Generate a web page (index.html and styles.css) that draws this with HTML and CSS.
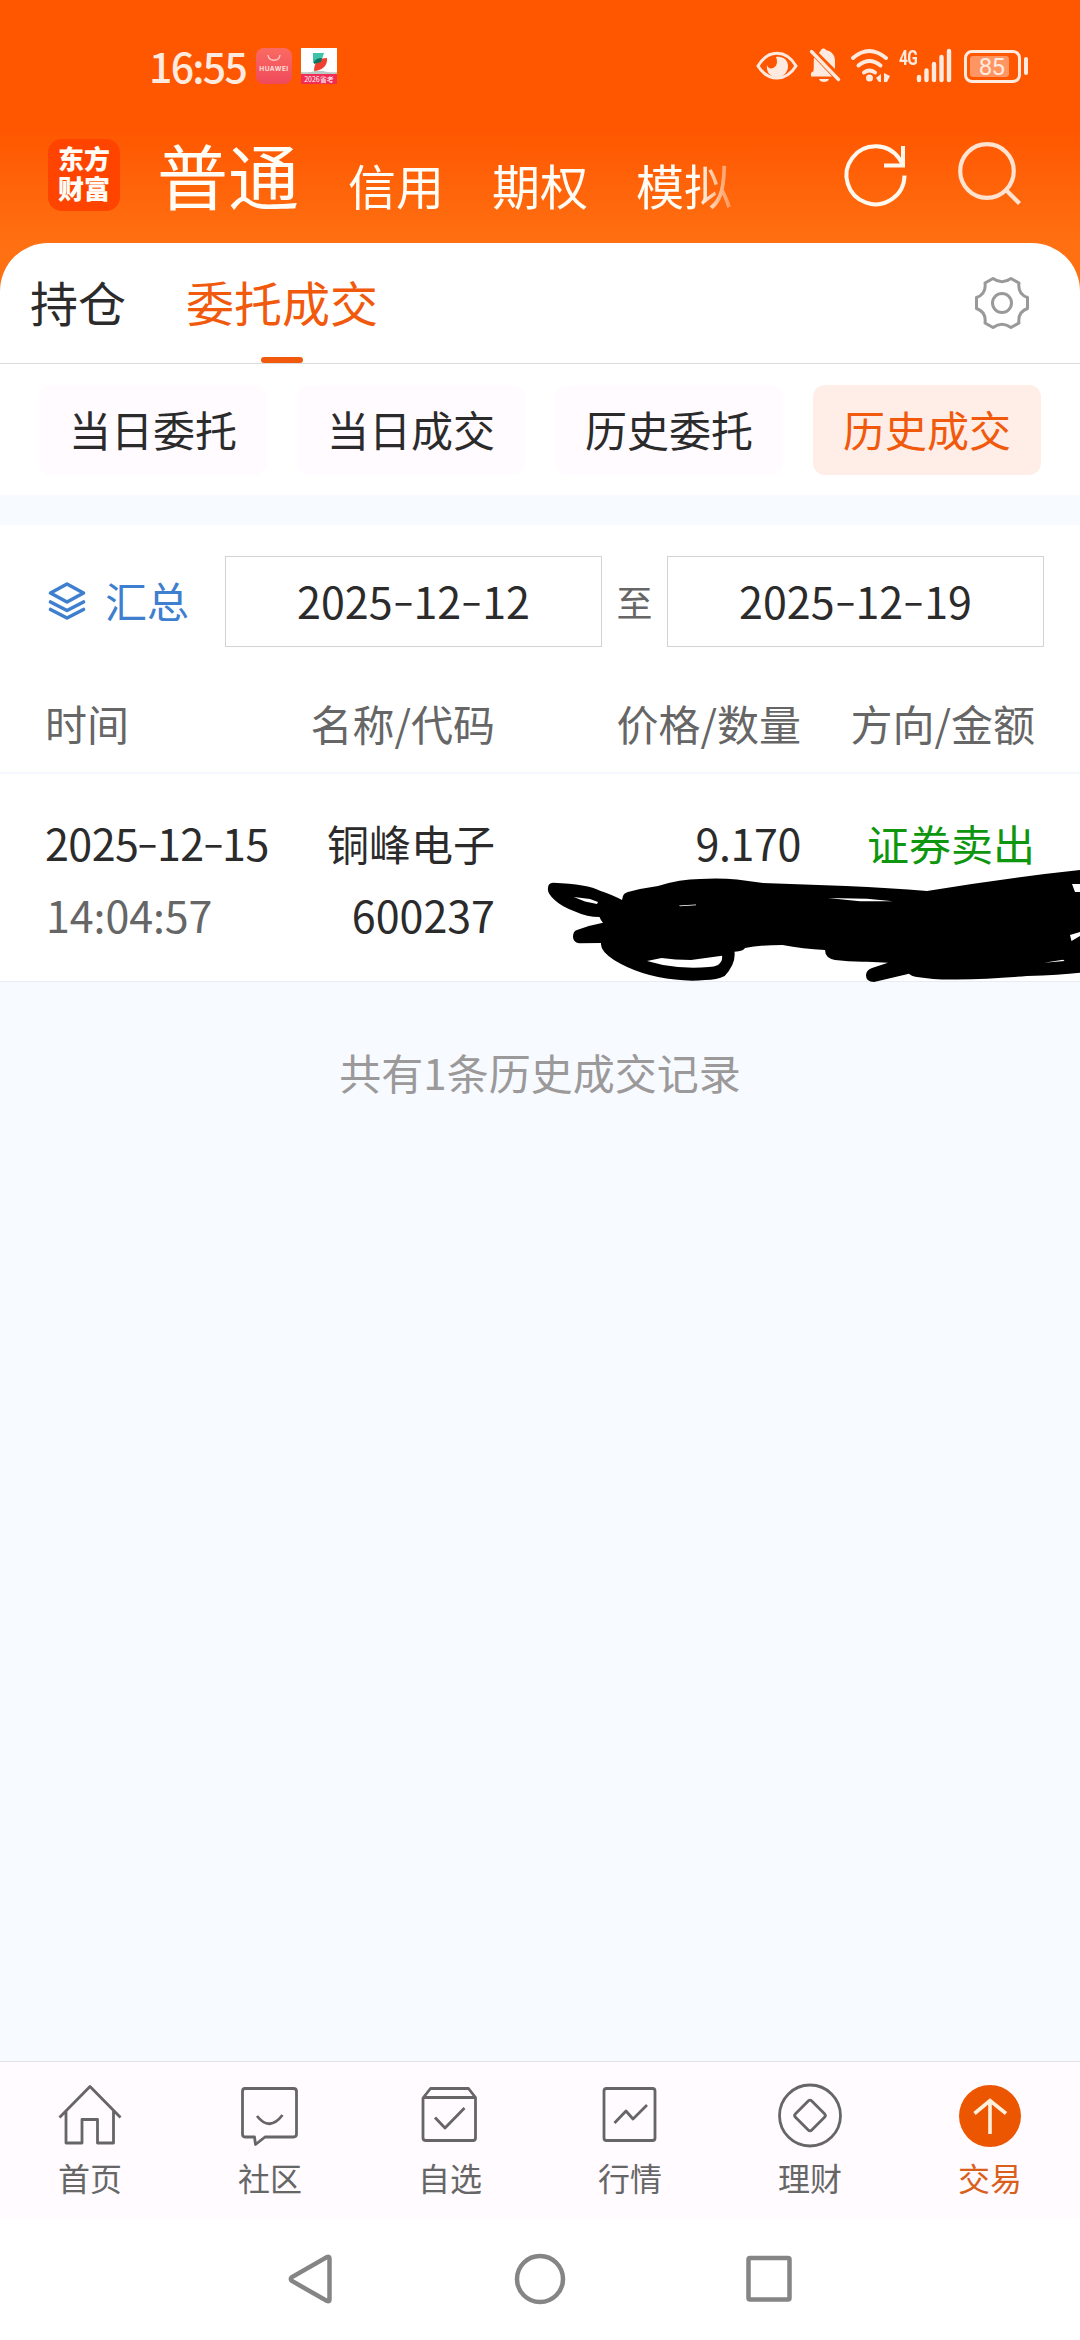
FILE: index.html
```
<!DOCTYPE html>
<html lang="zh-CN">
<head>
    <meta charset="UTF-8">
    <meta name="viewport" content="width=device-width, initial-scale=1.0">
    <title>历史成交</title>
    <link rel="stylesheet" href="styles.css">
</head>
<body>
    <div class="phone">
        <header class="top">
            <div class="status">
                <span class="clock">16:55</span>
                <div class="app-badge huawei">
                    <svg width="14" height="7" viewBox="0 0 14 7"><path d="M1 0c1 7 11 7 12 0" fill="none" stroke="#ffc9c4" stroke-width="1.4"/></svg>
                    <span>HUAWEI</span>
                </div>
                <div class="app-badge fenbi">
                    <svg width="36" height="26" viewBox="0 0 36 26">
                        <path d="M0 24q9 1 14-1h8q5 2 14 1v2H0z" fill="#b9c9c4"/>
                        <path d="M12 5h11l-3 9-8 1z" fill="#3fc3a8"/>
                        <path d="M26 10c1 8-6 13-13 13 0-8 4-13 13-13z" fill="#ee4030"/>
                        <path d="M13 14q2-4 8-4l-1 4-7 2z" fill="#0d7360"/>
                    </svg>
                    <span>2026省考</span>
                </div>
                <div class="signals">
                    <svg class="eye" width="42" height="30" viewBox="0 0 42 30">
                        <path d="M2 15C12-2 30-2 40 15 30 31 12 31 2 15z" fill="none" stroke="#ffeadf" stroke-width="3"/>
                        <path d="M20 6c7-1 12 3 12 9s-4 11-11 11-11-5-10-12c1 3 3 4 6 3 4-2 5-6 3-11z" fill="#ffeadf"/>
                    </svg>
                    <svg class="bell" width="34" height="36" viewBox="0 0 34 36">
                        <path d="M3 28.500h21L6 9.500C5.500 14 6 19 5.500 23L3 25zM11 5C12 3.500 12.500 3 13 2c1-2 4-2 5 0 7 2 9 6 9 11v8zM11 31h10c-1 4-9 4-10 0z" fill="#ffeadf"/>
                        <path d="M3.500 3.500l27 28" stroke="#ffeadf" stroke-width="3.400" stroke-linecap="round"/>
                    </svg>
                    <svg class="wifi" width="42" height="36" viewBox="0 0 42 36">
                        <g fill="none" stroke="#ffeadf" stroke-width="4" stroke-linecap="round">
                            <path d="M3 10q16-14 33 0"/>
                            <path d="M8.500 17.500q11-9 22 0"/>
                            <path d="M14 24.500q5.500-4 11 0"/>
                        </g>
                        <circle cx="19.500" cy="30" r="3.500" fill="#ffeadf"/>
                        <path d="M31 26v8h-2l-3-4zM34 34v-9l6 3-3 6z" fill="#ffeadf"/>
                    </svg>
                    <span class="net">4G</span>
                    <svg class="bars" width="36" height="36" viewBox="0 0 36 36">
                        <path d="M3 29v3M10.500 22.500V32M18 16v16M25.500 9v23M33 3v29" stroke="#ffeadf" stroke-width="4.400" stroke-linecap="round"/>
                    </svg>
                    <div class="battery"><span>85</span></div>
                    <i class="battery-tip"></i>
                </div>
            </div>
            <div class="account">
                <div class="logo">东方<br>财富</div>
                <nav class="account-tabs">
                    <span class="current">普通</span>
                    <span>信用</span>
                    <span>期权</span>
                    <span>模拟</span>
                </nav>
                <svg class="refresh" width="64" height="64" viewBox="0 0 64 64" fill="none" stroke="#fff8ee" stroke-width="4">
                    <path d="M60.500 32.500A29 29 0 1 1 55.500 16l3 5"/>
                    <path d="M59 3v19.500H40"/>
                </svg>
                <svg class="search" width="64" height="64" viewBox="0 0 64 64" fill="none" stroke="#ffe2cf" stroke-width="4.200">
                    <ellipse cx="29" cy="29" rx="26.800" ry="26.800"/>
                    <path d="M47.500 47.500L61.500 61.500"/>
                </svg>
            </div>
        </header>

        <main class="panel">
            <div class="main-tabs">
                <span>持仓</span>
                <span class="active">委托成交</span>
                <svg class="gear" width="54" height="52" viewBox="0 0 54 52" fill="none" stroke="#999" stroke-width="3" stroke-linejoin="round">
                    <path d="M18 1.500Q27 8 36 1.500L44 6Q42.500 17 52.500 20.500V31.500Q42.500 35 44 46L36 50.500Q27 44 18 50.500L10 46Q11.500 35 1.500 31.500V20.500Q11.500 17 10 6z"/>
                    <circle cx="27" cy="26" r="9.500"/>
                </svg>
            </div>

            <div class="chips">
                <span class="chip">当日委托</span>
                <span class="chip">当日成交</span>
                <span class="chip">历史委托</span>
                <span class="chip on">历史成交</span>
            </div>

            <div class="filter">
                <svg width="38" height="38" viewBox="0 0 38 38" fill="none" stroke="#3f7fcf" stroke-width="3.600" stroke-linejoin="round" stroke-linecap="round">
                    <path d="M19 2L35.500 11 19 20 2.500 11z"/>
                    <path d="M2.500 20L19 28.500 35.500 20"/>
                    <path d="M2.500 27.500L19 36 35.500 27.500"/>
                </svg>
                <span class="summary">汇总</span>
                <div class="date-box">2025<i>-</i>12<i>-</i>12</div>
                <span class="to">至</span>
                <div class="date-box">2025<i>-</i>12<i>-</i>19</div>
            </div>

            <div class="row head">
                <span>时间</span>
                <span>名称/代码</span>
                <span>价格/数量</span>
                <span>方向/金额</span>
            </div>

            <div class="row record">
                <div class="cell"><span class="date">2025<i>-</i>12<i>-</i>15</span><span class="time">14:04:57</span></div>
                <div class="cell"><span class="name">铜峰电子</span><span>600237</span></div>
                <div class="cell"><span class="price">9.170</span></div>
                <div class="cell"><span class="sell">证券卖出</span></div>
                <!-- hand-drawn cover over quantity and amount -->
                <svg class="scribble" width="550" height="130" viewBox="530 860 550 130">
                    <path fill-rule="evenodd" d="M622 900L623 896Q624 893 628 892Q643 888 658 886Q680 879 700 879Q720 878 737 879.500Q750 881 763 883L846 886Q890 888 927 891Q1005 878 1080 870
                        V884L1072 884L1075 892L1080 892V932L1070 935L1071.500 941L1080 936V972.700Q1060 975 1027 976Q990 979 957 979.500Q935 980 917 977Q911 976 909 973.700
                        L874 982Q866 982 866 975.500Q866 970 872 968L888 962.700Q878 962 867 961.700Q850 962 835 960Q825 958 825 950Q803 949 782.500 945Q760 945 745 948Q744 951 734.500 951.700
                        Q736 964 724.700 976Q717 980 705 980Q690 981.500 675 979.500Q640 976 614 960Q600 951 601 943L579 943.300Q573 942 573 936.700Q573 931 577 930Q590 925 603 922.700Q601 921 599.500 917
                        Q587 917 575.600 911.700Q562 907 554.600 900Q547 893 548 888Q548 883 553 882.700Q588 884 600 890.700Q613 895 622 900z
                        M573.800 897L590 899 598 902 597 904 585 901.500z
                        M647 961L661.500 958Q675 960 691 960L722 955.700Q723 961 718 965Q714 967 709 967Q685 969 663 965z
                        M828 898L867 898.700 893 901.300 860 901.300z
                        M679 905.500l17-1v.800l-16 1z
                        M1044 962.700L1063 959.700 1064.700 961z"/>
                </svg>
            </div>

            <div class="empty">共有1条历史成交记录</div>
        </main>

        <nav class="tabbar">
            <div class="tab">
                <svg width="66" height="66" viewBox="0 0 66 66">
                    <path d="M2.500 35.500L33 4.500 63.500 35.500M9 29V61H25V37.500H40.500V61H56.500V29"/>
                </svg>
                <span>首页</span>
            </div>
            <div class="tab">
                <svg width="66" height="66" viewBox="0 0 66 66">
                    <path d="M8 6.500H56.500Q59.500 6.500 59.500 9.500V52Q59.500 55 56.500 55H28L18.500 62.500 17.500 55H8Q5.500 55 5.500 52V9.500Q5.500 6.500 8 6.500zM20 34Q32.500 50 45.500 33"/>
                </svg>
                <span>社区</span>
            </div>
            <div class="tab">
                <svg width="66" height="66" viewBox="0 0 66 66">
                    <path d="M6 16L13.500 6.500H51.500L58.500 15.500V56Q58.500 58.500 56 58.500H9Q6 58.500 6 56zM6 15.500H58.500M18 35.500L28 46 47.500 26"/>
                </svg>
                <span>自选</span>
            </div>
            <div class="tab">
                <svg width="66" height="66" viewBox="0 0 66 66">
                    <rect x="7" y="6.500" width="51" height="52" rx="2.500"/>
                    <path d="M17.500 41L29 29 36 37 50 23"/>
                </svg>
                <span>行情</span>
            </div>
            <div class="tab">
                <svg width="66" height="66" viewBox="0 0 66 66">
                    <circle cx="33" cy="33.500" r="30.500"/>
                    <rect x="21.500" y="22" width="23" height="23" rx="2.500" transform="rotate(45 33 33.500)"/>
                </svg>
                <span>理财</span>
            </div>
            <div class="tab active">
                <svg width="66" height="66" viewBox="0 0 66 66">
                    <circle class="disc" cx="33" cy="34" r="31"/>
                    <path d="M33 52V19M17.500 31.500L33 18.500 49 31.500"/>
                </svg>
                <span>交易</span>
            </div>
        </nav>

        <div class="sysnav">
            <svg width="50" height="54" viewBox="0 0 50 54"><path d="M43.500 6.500V47.500Q43.500 50 41 49L6 29Q3.500 27 6 25L41 5Q43.500 4 43.500 6.500z"/></svg>
            <svg width="54" height="54" viewBox="0 0 54 54"><circle cx="27" cy="27" r="23"/></svg>
            <svg width="50" height="54" viewBox="0 0 50 54"><rect x="4.500" y="6" width="41" height="41.500" rx="1.500"/></svg>
        </div>
    </div>
</body>
</html>
```

FILE: styles.css
```
* {
    box-sizing: border-box;
}
body {
    margin: 0;
    font-family: "Noto Sans CJK SC", "Noto Sans", sans-serif;
    color: #2b2b2b;
}
i {
    font-style: normal;
}
svg {
    display: block;
    flex-shrink: 0;
    overflow: visible;
}
.phone {
    width: 1080px;
    height: 2340px;
    display: flex;
    flex-direction: column;
    background: #f7faff;
    overflow: hidden;
}

/* orange header */
.top {
    height: 300px;
    flex-shrink: 0;
    background: linear-gradient(#ff5600 0, #ff5600 125px, #ff7012 243px, #ff7012 100%);
}
.status {
    height: 104px;
    padding: 32px 52px 0 149px;
    display: flex;
    align-items: center;
    color: #ffeadf;
}
.clock {
    width: 107px;
    font-size: 41px;
    line-height: 60px;
    letter-spacing: -1.7px;
    font-weight: 500;
    margin-top: -6px;
}
.app-badge {
    width: 36px;
    height: 36px;
    margin-right: 9px;
    margin-top: -4px;
    display: flex;
    flex-direction: column;
    align-items: center;
    overflow: hidden;
}
.huawei {
    border-radius: 8px;
    background: linear-gradient(#fb6a62, #ef4a5c);
    padding-top: 7px;
}
.huawei span {
    font: bold 6.5px/8px Inter, sans-serif;
    letter-spacing: 0.5px;
    margin-top: 3px;
    color: #ffe0dc;
}
.fenbi {
    background: #fff;
}
.fenbi span {
    width: 36px;
    background: #f22d55;
    color: #fff;
    font-size: 7px;
    line-height: 10px;
    text-align: center;
}
.signals {
    margin-left: auto;
    margin-top: -4px;
    display: flex;
    align-items: center;
}
.bell {
    margin-left: 10px;
}
.wifi {
    margin-left: 8px;
}
.net {
    align-self: flex-start;
    width: 18px;
    margin-left: 7px;
    font: bold 21px/20px "Roboto", sans-serif;
    letter-spacing: -1px;
    transform: scaleX(0.74);
    transform-origin: left;
    white-space: nowrap;
}
.bars {
    margin-left: -1px;
}
.battery {
    width: 57px;
    height: 33px;
    margin-left: 12px;
    border: 3px solid #ffeadf;
    border-radius: 8px;
    padding: 3px;
}
.battery span {
    display: block;
    width: 39px;
    height: 21px;
    border-radius: 3px;
    background: #ff9563;
    font: 24px/22px "Roboto", sans-serif;
    letter-spacing: -0.8px;
    text-align: center;
    padding-left: 4px;
}
.battery-tip {
    width: 4px;
    height: 18px;
    margin-left: 3px;
    border-radius: 2px;
    background: #ffeadf;
}
.account {
    height: 139px;
    padding: 3px 58px 0 48px;
    display: flex;
    align-items: center;
    color: #fffdf6;
}
.logo {
    width: 72px;
    height: 72px;
    border-radius: 14px;
    background: #ff4400;
    font-size: 26px;
    line-height: 30px;
    font-weight: 900;
    text-align: center;
    padding-top: 4px;
}
.account-tabs {
    width: 590px;
    height: 80px;
    margin-left: 37px;
    padding-bottom: 6px;
    display: flex;
    align-items: baseline;
    gap: 48px;
    font-size: 48px;
    line-height: 48px;
    white-space: nowrap;
    -webkit-mask-image: linear-gradient(90deg, #000 540px, transparent 590px);
    mask-image: linear-gradient(90deg, #000 540px, transparent 590px);
}
.account-tabs span {
    position: relative;
    top: 2px;
}
.account-tabs .current {
    top: 1px;
    font-size: 71px;
    line-height: 74px;
    margin-right: 1px;
}
.refresh {
    margin-left: auto;
}
.search {
    margin-left: 50px;
    margin-top: -2px;
}

/* white sheet */
.panel {
    flex: 1;
    margin-top: -57px;
}
.main-tabs {
    height: 121px;
    padding: 0 51px 0 30px;
    display: flex;
    align-items: center;
    gap: 60px;
    background: #fff;
    border-bottom: 1px solid #dcdcdc;
    border-radius: 48px 48px 0 0;
    font-size: 48px;
}
.main-tabs span {
    position: relative;
    height: 120px;
    line-height: 117px;
}
.main-tabs .active {
    color: #f1590c;
}
.main-tabs .active::after {
    content: "";
    position: absolute;
    left: 75px;
    bottom: 0;
    width: 42px;
    height: 6px;
    border-radius: 3px;
    background: #f1590c;
}
.gear {
    margin-left: auto;
}
.chips {
    height: 131px;
    padding: 21px 39px 20px;
    display: flex;
    gap: 30px;
    background: #fff;
}
.chip {
    flex: 1;
    border-radius: 12px;
    background: #fffbff;
    font-size: 42px;
    line-height: 88px;
    text-align: center;
}
.chip.on {
    background: #ffeee7;
    color: #f1590c;
}
.filter {
    margin-top: 30px;
    height: 155px;
    padding: 31px 36px 34px 48px;
    display: flex;
    align-items: center;
    background: #fff;
}
.summary {
    flex: 1;
    padding-left: 19px;
    font-size: 42px;
    line-height: 84px;
    color: #3f7fcf;
    margin-top: -3px;
}
.date-box {
    width: 377px;
    height: 91px;
    border: 1px solid #d3d3d3;
    font-size: 43px;
    line-height: 87px;
    text-align: center;
}
.date-box i,
.date i {
    display: inline-block;
    margin: 0 3px;
    transform: translateY(-2px) scale(1.45, 0.9);
}
.to {
    width: 65px;
    text-align: center;
    font-size: 36px;
    color: #666;
    margin-top: -1px;
}
.row {
    display: grid;
    grid-template-columns: 240px 210px 306px 234px;
    padding: 0 45px;
    background: #fff;
    text-align: right;
}
.row > :first-child {
    text-align: left;
}
.head {
    height: 94px;
    border-bottom: 2px solid #f6f8ff;
    font-size: 42px;
    line-height: 86px;
    color: #666;
}
.record {
    position: relative;
    height: 208px;
    padding-top: 33px;
    border-bottom: 1px solid #e8ecf0;
    font-size: 43px;
    line-height: 71px;
}
.cell {
    display: flex;
    flex-direction: column;
}
.cell span {
    height: 72px;
    white-space: nowrap;
}
.cell .date {
    letter-spacing: -0.5px;
}
.date i {
    margin: 0 2px;
}
.cell .time {
    color: #666;
    letter-spacing: -0.1px;
    padding-left: 1px;
}
.cell .name {
    font-size: 42px;
}
.cell .price {
    letter-spacing: -0.4px;
}
.cell .sell {
    color: #0f960f;
    font-size: 42px;
}
.scribble {
    position: absolute;
    right: 0;
    top: 86px;
}
.empty {
    padding-top: 48px;
    font-size: 42px;
    line-height: 83px;
    text-align: center;
    color: #9b9999;
}

/* bottom bars */
.tabbar {
    height: 157px;
    display: grid;
    grid-template-columns: repeat(6, 1fr);
    border-top: 1px solid #e3e3e6;
    background: #fffbff;
}
.tab {
    display: flex;
    flex-direction: column;
    align-items: center;
    padding-top: 20px;
    font-size: 32px;
    line-height: 58px;
    color: #666;
}
.tab svg {
    fill: none;
    stroke: #666;
    stroke-width: 2.8;
    stroke-linejoin: round;
}
.tab.active {
    color: #d9601c;
}
.tab.active svg {
    stroke: #fff0dd;
    stroke-width: 3.6;
    stroke-linejoin: miter;
}
.tab .disc {
    fill: #ed5600;
    stroke: none;
}
.sysnav {
    height: 122px;
    display: flex;
    justify-content: center;
    align-items: center;
    gap: 177px;
    background: #fff;
}
.sysnav svg {
    fill: none;
    stroke: #858585;
    stroke-width: 4.5;
}
```
